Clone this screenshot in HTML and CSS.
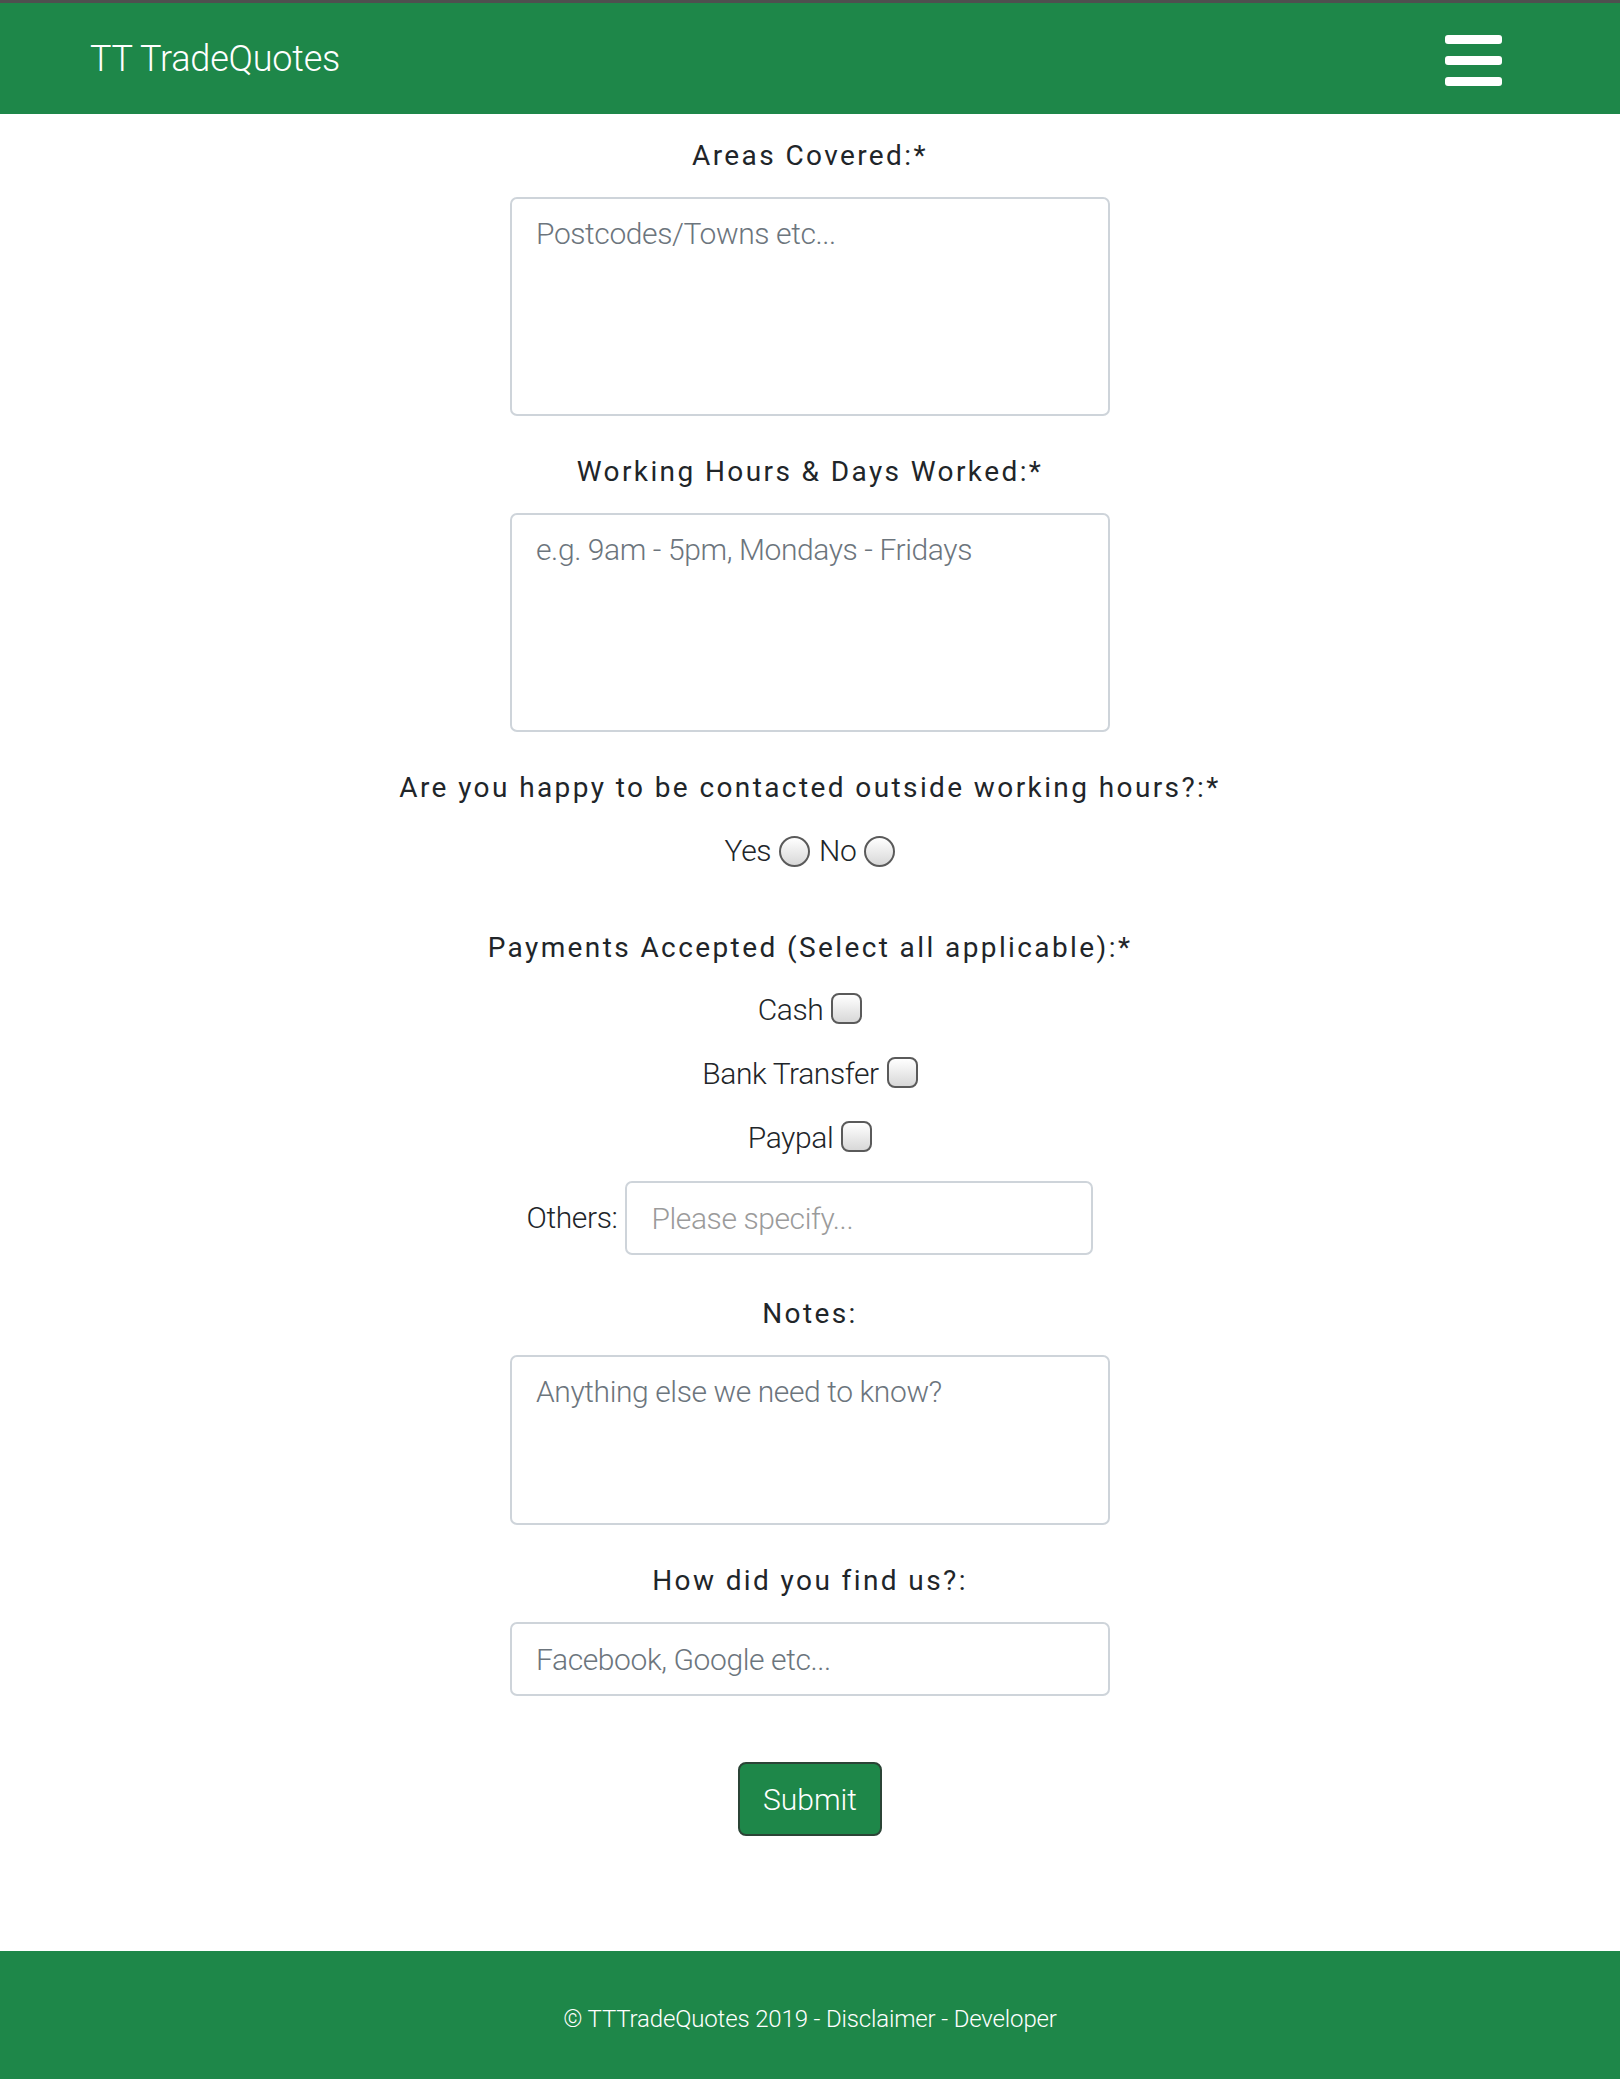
FILE: index.html
```html
<!DOCTYPE html>
<html lang="en">
<head>
<meta charset="utf-8">
<title>TT TradeQuotes</title>
<link rel="stylesheet" href="styles.css">
</head>
<body>
<header class="navbar">
  <a class="brand" href="#">TT TradeQuotes</a>
  <button class="toggler" type="button" aria-label="Menu">
    <span class="bar"></span><span class="bar"></span><span class="bar"></span>
  </button>
</header>
<main class="page">
  <form class="quote-form">
    <div class="group">
      <label class="field-label">Areas Covered:*</label>
      <textarea class="control area-lg" placeholder="Postcodes/Towns etc..."></textarea>
    </div>
    <div class="group">
      <label class="field-label">Working Hours &amp; Days Worked:*</label>
      <textarea class="control area-lg" placeholder="e.g. 9am - 5pm, Mondays - Fridays"></textarea>
    </div>
    <div class="group">
      <label class="field-label">Are you happy to be contacted outside working hours?:*</label>
      <div class="radio-row">
        <span class="opt-text">Yes</span><input type="radio" name="contact" class="radio">
        <span class="opt-text no">No</span><input type="radio" name="contact" class="radio">
      </div>
    </div>
    <div class="group payments">
      <label class="field-label">Payments Accepted (Select all applicable):*</label>
      <div class="check-row"><span class="opt-text">Cash</span><input type="checkbox" class="check"></div>
      <div class="check-row"><span class="opt-text">Bank Transfer</span><input type="checkbox" class="check"></div>
      <div class="check-row"><span class="opt-text">Paypal</span><input type="checkbox" class="check"></div>
      <div class="others-row">
        <span class="opt-text">Others:</span>
        <input type="text" class="control others" placeholder="Please specify...">
      </div>
    </div>
    <div class="group">
      <label class="field-label">Notes:</label>
      <textarea class="control area-md" placeholder="Anything else we need to know?"></textarea>
    </div>
    <div class="group">
      <label class="field-label">How did you find us?:</label>
      <input type="text" class="control line" placeholder="Facebook, Google etc...">
    </div>
    <button type="submit" class="submit">Submit</button>
  </form>
</main>
<footer class="footer">
  <p class="footer-text">© TTTradeQuotes 2019 - Disclaimer - Developer</p>
</footer>
</body>
</html>
```

FILE: styles.css
```css
* { box-sizing: border-box; }

html, body {
  margin: 0;
  padding: 0;
  background: #fff;
}

body {
  font-family: Roboto, "Noto Sans", sans-serif;
  color: #212529;
}

.navbar {
  height: 114px;
  border-top: 3px solid #4f4f4f;
  background: #1e8749;
  display: flex;
  align-items: center;
  justify-content: space-between;
  padding: 0 118px 0 90px;
}

.brand {
  color: #fff;
  font-weight: 300;
  font-size: 36px;
  letter-spacing: -0.2px;
  text-decoration: none;
  line-height: 1;
}

.toggler {
  width: 57px;
  height: 51px;
  padding: 0;
  border: 0;
  background: transparent;
  display: flex;
  flex-direction: column;
  justify-content: space-between;
  margin-top: 4px;
}

.bar {
  display: block;
  width: 57px;
  height: 9px;
  border-radius: 3px;
  background: #fff;
}

.page {
  padding: 22px 0 115px;
}

.quote-form {
  display: flex;
  flex-direction: column;
  align-items: center;
}

.group {
  display: flex;
  flex-direction: column;
  align-items: center;
  margin-bottom: 36px;
}

.field-label {
  display: block;
  font-size: 28px;
  line-height: 40px;
  letter-spacing: 2.4px;
  font-weight: 400;
  margin-bottom: 21px;
  text-align: center;
}

.control {
  display: block;
  width: 600px;
  font-family: Roboto, "Noto Sans", sans-serif;
  font-weight: 300;
  font-size: 30px;
  line-height: 45px;
  letter-spacing: -0.4px;
  padding: 12px 24px;
  border: 2px solid #ced4da;
  border-radius: 7px;
  color: #495057;
  background: #fff;
  resize: none;
  outline: none;
  margin: 0;
}

.control::placeholder {
  color: #6c757d;
  opacity: 1;
}

.area-lg { height: 219px; }
.area-md { height: 170px; }
.line { height: 74px; }

.opt-text {
  font-weight: 300;
  font-size: 30px;
  line-height: 40px;
  letter-spacing: -0.4px;
  color: #212529;
}

.radio-row {
  display: flex;
  align-items: center;
  height: 40px;
  margin-top: 2px;
  margin-bottom: 21px;
}

.radio, .check {
  appearance: none;
  -webkit-appearance: none;
  margin: 0 0 0 8px;
  width: 31px;
  height: 31px;
  border: 2px solid #5a5a5a;
  background: linear-gradient(#ffffff, #d8d8d8);
  flex: none;
}

.radio { border-radius: 50%; }
.check { border-radius: 8px; margin-top: -4px; }

.opt-text.no { margin-left: 9px; }

.payments .field-label { margin-bottom: 22px; }

.check-row {
  display: flex;
  align-items: center;
  height: 40px;
  margin-bottom: 24px;
}

.others-row {
  display: flex;
  align-items: center;
  margin-top: -1px;
  margin-bottom: 3px;
}

.others {
  width: 468px;
  height: 74px;
  margin-left: 8px;
}

.others::placeholder {
  color: #9b9b9b;
}

.submit {
  margin-top: 30px;
  width: 144px;
  height: 74px;
  background: #1e8749;
  color: #fff;
  border: 2px solid #2b4436;
  border-radius: 8px;
  font-family: Roboto, "Noto Sans", sans-serif;
  font-weight: 300;
  font-size: 30px;
  padding: 0;
}

.footer {
  background: #1e8749;
  padding: 53px 0 46px;
  text-align: center;
}

.footer-text {
  margin: 0;
  color: #fff;
  font-weight: 300;
  font-size: 24px;
  line-height: 30px;
  letter-spacing: -0.15px;
}
```
